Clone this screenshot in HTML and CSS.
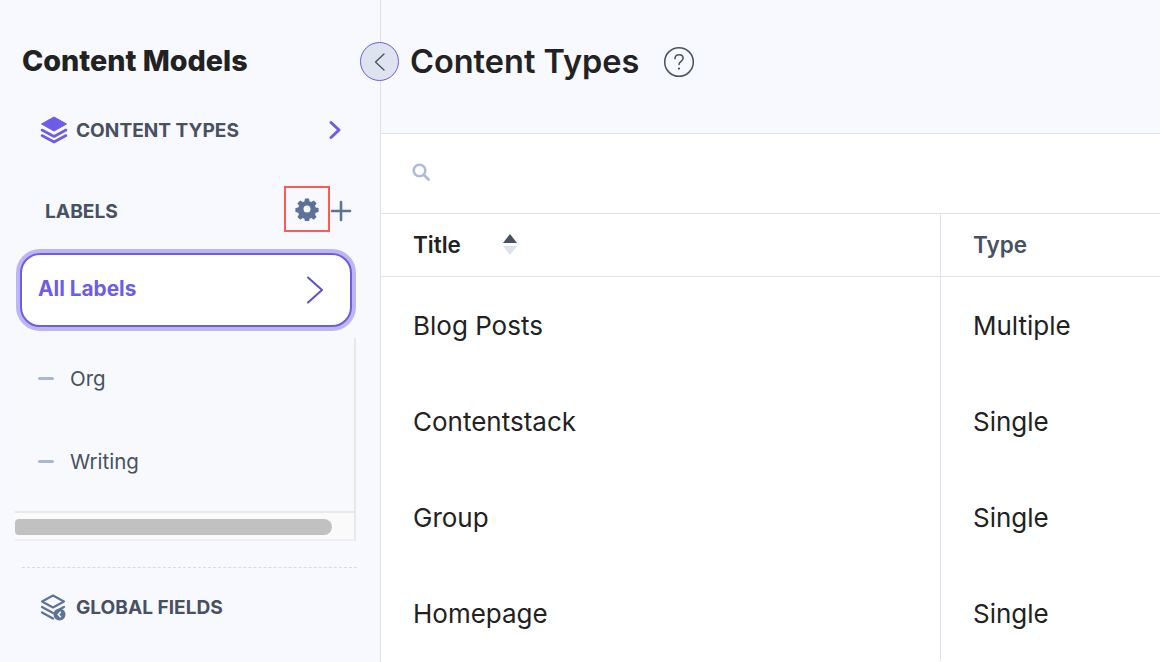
FILE: index.html
```html
<!DOCTYPE html>
<html lang="en">
<head>
<meta charset="utf-8">
<title>Content Types</title>
<link rel="stylesheet" href="styles.css">
</head>
<body>
<div class="app">
  <aside class="sidebar">
    <h2 class="side-title">Content Models</h2>
    <div class="nav-row">
      <svg class="nav-icon" width="28" height="28" viewBox="0 0 28 28"><path d="M14 1 26.500 8 14 15 1.500 8Z" fill="#6c5ce7" stroke="#6c5ce7" stroke-linejoin="round"/><path d="M2 14 14 20.500 26 14M2 19.500 14 26 26 19.500" fill="none" stroke="#6c5ce7" stroke-width="2.600" stroke-linecap="round" stroke-linejoin="round"/></svg>
      <span class="nav-text">CONTENT TYPES</span>
      <svg class="nav-chevron" width="16" height="20" viewBox="0 0 16 20"><path d="M3 2.500 11 10 3 17.500" fill="none" stroke="#6c5ce7" stroke-width="3" stroke-linecap="round" stroke-linejoin="round"/></svg>
    </div>
    <div class="labels-head">
      <span class="labels-text">LABELS</span>
      <span class="gear-box">
        <svg width="24" height="24" viewBox="0 0 24 24"><path fill="#5d7297" fill-rule="evenodd" d="M10 1.500h4l.6 2.900 1.700.7 2.500-1.600 2.800 2.800-1.600 2.500.7 1.700 2.900.6v4l-2.900.6-.7 1.700 1.600 2.500-2.800 2.800-2.500-1.600-1.700.7-.6 2.900h-4l-.6-2.900-1.700-.7-2.500 1.600-2.800-2.800 1.600-2.500-.7-1.700-2.900-.6v-4l2.900-.6.7-1.700-1.600-2.500 2.800-2.800 2.500 1.600 1.700-.7ZM12 8.500a3.500 3.500 0 1 0 0 7 3.500 3.500 0 0 0 0-7Z"/></svg>
      </span>
      <svg class="plus" width="22" height="22" viewBox="0 0 22 22"><path d="M11 2v18M2 11h18" stroke="#5d7297" stroke-width="2.600" stroke-linecap="round"/></svg>
    </div>
    <div class="all-labels">
      <span class="all-text">All Labels</span>
      <svg width="20" height="28" viewBox="0 0 20 28"><path d="M3 1.500 17 14 3 26.500" fill="none" stroke="#5b50c9" stroke-width="2" stroke-linecap="round" stroke-linejoin="round"/></svg>
    </div>
    <div class="label-scroll">
      <div class="label-list">
        <div class="label-item"><i class="dash"></i><span>Org</span></div>
        <div class="label-item"><i class="dash"></i><span>Writing</span></div>
      </div>
      <div class="hscroll"><div class="hthumb"></div></div>
    </div>
    <div class="dashed"></div>
    <div class="nav-row nav-row-global">
      <svg class="nav-icon" width="28" height="28" viewBox="0 0 28 28"><path d="M13 2.500 24 8.500 13 14.500 2 8.500Z" fill="none" stroke="#5d7297" stroke-width="2" stroke-linejoin="round"/><path d="M2 14 13 20M2 19.500 13 25.500" fill="none" stroke="#5d7297" stroke-width="2.200" stroke-linecap="round"/><path d="M24 14 19 16.700" fill="none" stroke="#5d7297" stroke-width="2.200" stroke-linecap="round"/><circle cx="19.500" cy="21.500" r="6" fill="#5d7297"/><path d="M20.800 18.800 18.300 21.500 20.800 24.200" fill="none" stroke="#f8f9fe" stroke-width="1.600"/></svg>
      <span class="nav-text">GLOBAL FIELDS</span>
    </div>
    <button class="collapse" type="button" aria-label="Collapse">
      <svg width="14" height="20" viewBox="0 0 14 20"><path d="M11 2 2.500 10 11 18" fill="none" stroke="#475161" stroke-width="1.300" stroke-linecap="round" stroke-linejoin="round"/></svg>
    </button>
  </aside>
  <main class="main">
    <header class="head">
      <h1 class="page-title">Content Types</h1>
      <svg width="32" height="32" viewBox="0 0 32 32"><circle cx="16" cy="16" r="14.300" fill="none" stroke="#475161" stroke-width="1.500"/><path d="M12 12.800c0-2.400 1.800-4 4.100-4 2.300 0 4 1.500 4 3.500 0 3-4.100 3.100-4.100 6.200" fill="none" stroke="#475161" stroke-width="1.500" stroke-linecap="round"/><circle cx="16" cy="22.600" r="1.100" fill="#475161"/></svg>
    </header>
    <div class="search">
      <svg width="20" height="20" viewBox="0 0 20 20"><circle cx="8.500" cy="8.500" r="5.800" fill="none" stroke="#aebdd3" stroke-width="2.600"/><path d="M13 13 17.500 17.500" stroke="#aebdd3" stroke-width="2.800" stroke-linecap="round"/></svg>
    </div>
    <div class="table">
      <div class="tr th">
        <div class="c1 th-title"><span>Title</span>
          <span class="sort"><i class="up"></i><i class="down"></i></span>
        </div>
        <div class="c2 th-type">Type</div>
      </div>
      <div class="tr"><div class="c1">Blog Posts</div><div class="c2">Multiple</div></div>
      <div class="tr"><div class="c1">Contentstack</div><div class="c2">Single</div></div>
      <div class="tr"><div class="c1">Group</div><div class="c2">Single</div></div>
      <div class="tr"><div class="c1">Homepage</div><div class="c2">Single</div></div>
    </div>
  </main>
</div>
</body>
</html>
```
FILE: styles.css
```css
* { box-sizing: border-box; }
html, body { margin: 0; height: 100%; overflow: hidden; background: #fff; }
body { font-family: Inter, "Liberation Sans", sans-serif; color: #222; font-optical-sizing: none; font-variation-settings: "opsz" 14; }
.app { display: flex; height: 662px; width: 1160px; overflow: hidden; }

.sidebar {
  position: relative;
  flex: 0 0 381px;
  background: #f8f9fe;
  border-right: 1px solid #dde0ef;
  display: flex;
  flex-direction: column;
}
.side-title {
  margin: 0;
  padding: 43px 0 0 22px;
  font-size: 28.700px;
  line-height: 36px;
  font-weight: 800;
  color: #222;
}
.nav-row {
  display: flex;
  align-items: center;
  height: 30px;
  margin-top: 36px;
  padding: 0 36px 0 40px;
}
.nav-icon { flex: none; }
.nav-text {
  flex: 1;
  margin-left: 8px;
  font-size: 19.100px;
  font-weight: 700;
  color: #475161;
}
.labels-head {
  display: flex;
  align-items: center;
  height: 46px;
  margin-top: 43px;
  padding-left: 45px;
}
.labels-text { flex: 0 0 239px; font-size: 19.200px; font-weight: 700; color: #475161; }
.gear-box {
  flex: none;
  width: 46px;
  height: 46px;
  margin-top: -4px;
  border: 2px solid #fb5b51;
  display: flex;
  align-items: center;
  justify-content: center;
}
.plus { flex: none; }
.all-labels {
  margin: 19px 0 0 20px;
  width: 332px;
  height: 74px;
  background: #fff;
  border: 2px solid #6c5ce7;
  border-radius: 20px;
  box-shadow: 0 0 0 4px #bdb5f4;
  display: flex;
  align-items: center;
  justify-content: space-between;
  padding: 0 25px 0 16px;
  font-size: 20.800px;
  font-weight: 700;
  color: #6c5ce7;
}
.all-text { margin-top: -3px; }
.label-scroll {
  margin: 11px 0 0 15px;
  width: 341px;
  height: 203px;
  border-right: 2px solid #e8e8e8;
  background: #f8f9fc;
  display: flex;
  flex-direction: column;
}
.label-list { flex: 1; padding-left: 23px; margin-top: -1px; }
.label-item {
  display: flex;
  align-items: center;
  height: 83px;
  font-size: 20.500px;
  color: #475161;
}
.dash { width: 16px; height: 3px; border-radius: 2px; background: #a9b8d0; margin-right: 16px; }
.hscroll {
  height: 30px;
  flex: none;
  background: #fafafa;
  border-top: 2px solid #e8e8e8;
  border-bottom: 2px solid #efefef;
  padding-top: 6px;
}
.hthumb { width: 317px; height: 16px; background: #c1c1c1; border-radius: 4px 8px 8px 4px; }
.dashed { margin: 26px 0 0 22px; width: 335px; border-top: 1px dashed #d5dae3; }
.nav-row-global { margin-top: 24px; }
.collapse {
  position: absolute;
  left: 360px;
  top: 42px;
  width: 39px;
  height: 39px;
  padding: 0;
  border-radius: 50%;
  background: #dde3ef;
  border: 1px solid #6c5ce7;
  display: flex;
  align-items: center;
  justify-content: center;
  z-index: 2;
}

.main { flex: 1; min-width: 0; display: flex; flex-direction: column; }
.head {
  height: 134px;
  flex: none;
  background: #f8f9fe;
  border-bottom: 1px solid #dde0ef;
  display: flex;
  align-items: flex-start;
  padding: 40px 0 0 29px;
  gap: 24px;
}
.page-title { margin: 0; font-size: 32.500px; line-height: 44px; font-weight: 600; color: #222; }
.head svg { margin-top: 6px; }
.search {
  height: 80px;
  flex: none;
  border-bottom: 1px solid #dde0ef;
  padding: 0 0 4px 30px;
  display: flex;
  align-items: center;
}
.tr { display: flex; height: 96px; }
.c1 {
  flex: 0 0 560px;
  border-right: 1px solid #dde0ef;
  padding-left: 32px;
  display: flex;
  align-items: center;
  font-size: 26px;
  color: #222;
}
.c2 { flex: 1; padding-left: 32px; display: flex; align-items: center; font-size: 26px; color: #222; }
.tr.th { height: 63px; border-bottom: 1px solid #dde0ef; }
.th-title { font-size: 22.500px; font-weight: 600; padding-bottom: 2px; }
.th-type { font-size: 22.500px; font-weight: 600; color: #475161; padding-bottom: 2px; }
.sort { display: flex; flex-direction: column; gap: 3px; margin-left: 42px; margin-top: 1px; }
.sort i { display: block; width: 0; height: 0; border-left: 7px solid transparent; border-right: 7px solid transparent; }
.sort .up { border-bottom: 9px solid #475161; }
.sort .down { border-top: 9px solid #dde0ef; }
```
